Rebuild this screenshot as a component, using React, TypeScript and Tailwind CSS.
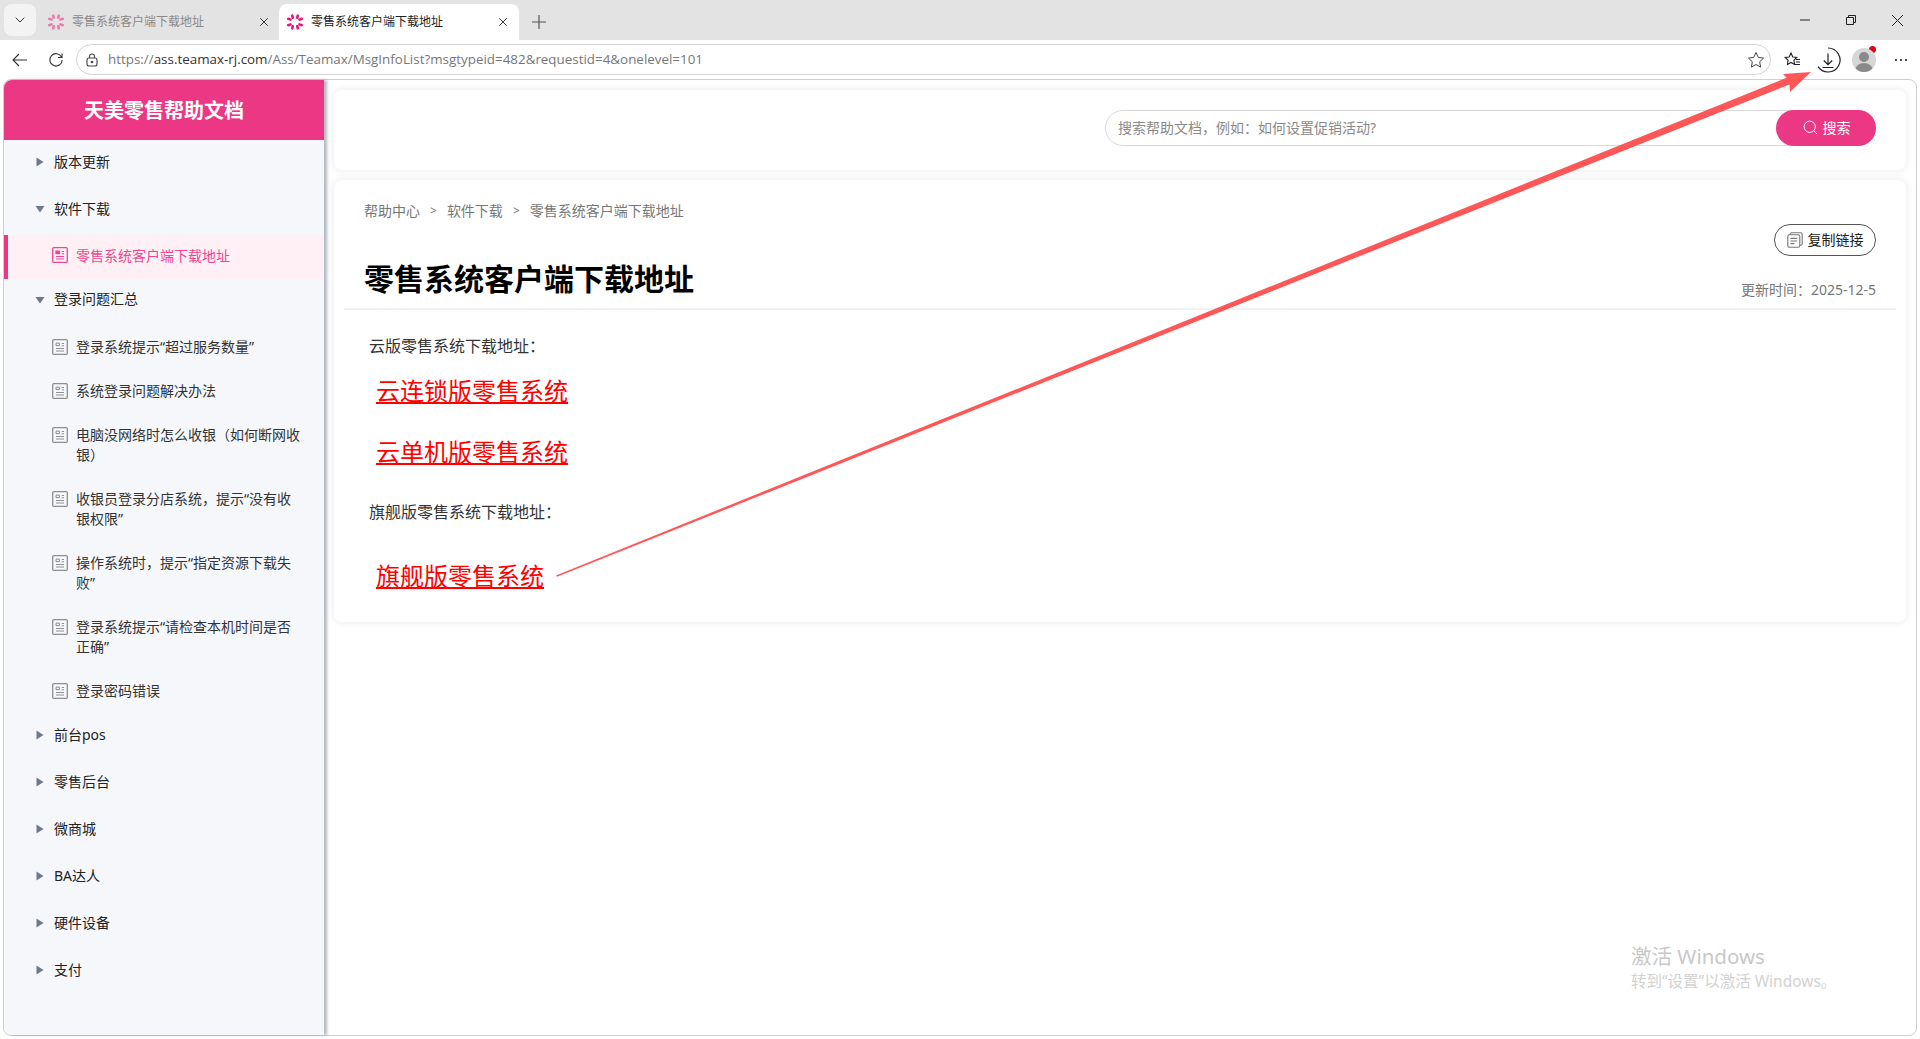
import { ChevronDown, Search, X } from "lucide-react";

const cjk = "font-['Noto_Sans','Noto_Sans_CJK_SC',sans-serif]";

const Favicon = ({ faded }: { faded?: boolean }) => (
  <svg viewBox="0 0 16 16" className={`h-4 w-4 shrink-0 ${faded ? "opacity-50" : ""}`}>
    <g fill="#f0127a">
      <rect x="4.200" y="0.400" width="2.600" height="4.600" rx="1.100" transform="rotate(-14 5.500 2.700)" />
      <rect x="9.200" y="0.400" width="2.600" height="4.600" rx="1.100" transform="rotate(14 10.500 2.700)" />
      <rect x="4.200" y="11" width="2.600" height="4.600" rx="1.100" transform="rotate(14 5.500 13.300)" />
      <rect x="9.200" y="11" width="2.600" height="4.600" rx="1.100" transform="rotate(-14 10.500 13.300)" />
      <rect x="0" y="3.900" width="4.800" height="2.600" rx="1.100" transform="rotate(20 2.400 5.200)" />
      <rect x="0" y="9.500" width="4.800" height="2.600" rx="1.100" transform="rotate(-20 2.400 10.800)" />
      <rect x="11.200" y="3.900" width="4.800" height="2.600" rx="1.100" transform="rotate(-20 13.600 5.200)" />
      <rect x="11.200" y="9.500" width="4.800" height="2.600" rx="1.100" transform="rotate(20 13.600 10.800)" />
    </g>
  </svg>
);

const DocIcon = ({ active }: { active?: boolean }) => {
  const color = active ? "#f0468f" : "#8f8f8f";
  return (
    <svg viewBox="0 0 16 16" className="h-4 w-4 shrink-0" fill="none" stroke={color} strokeWidth="1.300">
      <rect x="0.700" y="0.700" width="14.600" height="14.600" rx="1" />
      <path d="M4 4.200h3.400v2.400H4z" fill={active ? color : "none"} strokeWidth={active ? 1.300 : 1} />
      <path d="M9.800 4.500H12M9.800 6.800H12M4 9.500h8M4 12h8" strokeWidth="1.100" />
    </svg>
  );
};

const CopyIcon = () => (
  <svg viewBox="0 0 16 16" className="h-4 w-4 shrink-0" fill="none" stroke="#777" strokeWidth="1.100">
    <rect x="0.800" y="2.800" width="12" height="12.500" rx="1.800" />
    <path d="M3.200 2.800V2.200A1.500 1.500 0 0 1 4.700.700h9a1.500 1.500 0 0 1 1.500 1.500v9.600a1.500 1.500 0 0 1-1.500 1.500h-.9" />
    <path d="M3.400 6.400h6.800M3.400 9h6.800M3.400 11.600h4" />
  </svg>
);

const Caret = ({ open }: { open?: boolean }) => (
  <svg viewBox="0 0 10 10" className="mt-[2px] h-[10px] w-[10px] shrink-0" fill="#6b7a90">
    {open ? <path d="M0.500 2h9L5 8.500z" /> : <path d="M1.500 0.500v9L8.500 5z" />}
  </svg>
);

const TopItem = ({ label, open, className = "h-[47px]" }: { label: string; open?: boolean; className?: string }) => (
  <div className={`flex items-center gap-[9px] pb-[5px] pl-[31px] text-[14px] text-[#222] ${className}`}>
    <Caret open={open} />
    <span>{label}</span>
  </div>
);

const SubItem = ({ lines }: { lines: string[] }) => (
  <div className={`flex items-start gap-2 pl-[48px] text-[14px] leading-[20px] text-[#333] ${lines.length > 1 ? "h-[64px] pt-3" : "h-[44px] pt-3"}`}>
    <span className="pt-[2px]">
      <DocIcon />
    </span>
    <div>
      {lines.map((line) => (
        <div key={line}>{line}</div>
      ))}
    </div>
  </div>
);

const Tab = ({ active }: { active?: boolean }) => (
  <div className={`flex h-9 items-center pl-2 ${active ? "w-[240px] rounded-t-[8px] bg-white pr-[9px]" : "w-[239px] pr-2"}`}>
    <Favicon faded={!active} />
    <span className={`ml-2 flex-1 text-[12px] ${active ? "text-[#222]" : "text-[#8a8a8a]"}`}>零售系统客户端下载地址</span>
    <X className="h-[14px] w-[14px] text-[#222]" strokeWidth={1.5} />
  </div>
);

const ChromeBar = () => (
  <>
    <div className="flex h-10 items-end bg-[#e3e3e3] pl-1">
      <div className="mb-1 flex h-8 w-8 items-center justify-center rounded-[8px] bg-[#f3f3f3]">
        <ChevronDown className="h-4 w-4 text-[#333]" strokeWidth={1.5} />
      </div>
      <div className="ml-[4px]">
        <Tab />
      </div>
      <Tab active />
      <svg viewBox="0 0 16 16" className="mb-[10px] ml-3 h-4 w-4" fill="none" stroke="#555" strokeWidth="1.200">
        <path d="M8 1v14M1 8h14" />
      </svg>
      <div className="ml-auto flex h-full items-center">
        <div className="flex w-[46px] justify-center">
          <svg viewBox="0 0 10 10" className="h-[10px] w-[10px]" fill="none" stroke="#222">
            <path d="M0 5h10" />
          </svg>
        </div>
        <div className="flex w-[46px] justify-center">
          <svg viewBox="0 0 10 10" className="h-[10px] w-[10px]" fill="none" stroke="#222">
            <path d="M0.500 2.500h7v7h-7zM2.500 2.500v-2h7v7h-2" />
          </svg>
        </div>
        <div className="flex w-[46px] justify-center">
          <svg viewBox="0 0 10 10" className="h-[11px] w-[11px]" fill="none" stroke="#222" strokeWidth="0.900">
            <path d="M0 0l10 10M10 0L0 10" />
          </svg>
        </div>
      </div>
    </div>
    <div className="flex h-[39px] items-start bg-white">
      <div className="flex h-[39px] w-[76px] shrink-0 items-center pl-3">
        <svg viewBox="0 0 16 16" className="h-4 w-4" fill="none" stroke="#333" strokeWidth="1.100">
          <path d="M15 8H1M7 2L1 8l6 6" />
        </svg>
        <svg viewBox="0 0 16 16" className="ml-5 h-4 w-4" fill="none" stroke="#333" strokeWidth="1.100">
          <path d="M13.600 5.200A6.200 6.200 0 1 0 14.200 8M14 1.500v4h-4" />
        </svg>
      </div>
      <div className="mt-1 flex h-[31px] w-[1695px] items-center rounded-full border border-[#d4d4d4] bg-white pl-[9px] pr-[5px]">
        <svg viewBox="0 0 12 14" className="h-[14px] w-3" fill="none" stroke="#444" strokeWidth="1.100">
          <rect x="1" y="5" width="10" height="8" rx="2" />
          <path d="M3.500 5V3.500a2.500 2.500 0 0 1 5 0V5" />
          <circle cx="6" cy="9" r="0.800" fill="#444" />
        </svg>
        <span className="ml-[10px] font-['Open_Sans',sans-serif] text-[13.400px] text-[#777]">
          https://<span className="text-[#333]">ass.teamax-rj.com</span>/Ass/Teamax/MsgInfoList?msgtypeid=482&amp;requestid=4&amp;onelevel=101
        </span>
        <svg viewBox="0 0 18 18" className="ml-auto h-[18px] w-[18px]" fill="none" stroke="#444" strokeWidth="1">
          <path d="M9 1.500l2.300 4.900 5.200.7-3.800 3.700.9 5.300L9 13.500l-4.600 2.600.9-5.300L1.500 7.100l5.200-.7z" />
        </svg>
      </div>
      <div className="ml-3 flex h-[39px] items-center">
        <svg viewBox="0 0 18 18" className="h-[18px] w-[18px]" fill="none" stroke="#222" strokeWidth="1.100">
          <path d="M8 2l1.800 4 4 .5-2.900 2.800.7 4.200L8 11.400l-3.600 2.100.7-4.200L2.200 6.500l4-.5z" />
          <path d="M13 8.500h4M12.800 11h4.200M12 13.500h5" />
        </svg>
        <div className="relative ml-[14px] h-[26px] w-[26px]">
          <svg viewBox="0 0 26 26" className="h-[26px] w-[26px]" fill="none" stroke="#222" strokeWidth="1.200">
            <path d="M13 1a12 12 0 1 1-10 18.600" />
            <path d="M13 6.500v11M8.800 13.500l4.200 4.200 4.200-4.200M7.500 20.500h11" />
          </svg>
        </div>
        <div className="relative ml-[11px] flex h-[24px] w-[24px] items-end justify-center overflow-hidden rounded-full bg-[#d6d6d6]">
          <svg viewBox="0 0 24 24" className="h-[24px] w-[24px]" fill="#8a8a8a">
            <circle cx="12" cy="9" r="5" />
            <path d="M3 24c0-6 4-9 9-9s9 3 9 9z" />
          </svg>
        </div>
        <div className="-ml-[7px] -mt-[21px] h-[7px] w-[7px] rounded-full bg-[#e3000f]" />
        <svg viewBox="0 0 16 4" className="ml-[17px] h-1 w-4" fill="#222">
          <circle cx="3" cy="2" r="1.100" />
          <circle cx="8" cy="2" r="1.100" />
          <circle cx="13" cy="2" r="1.100" />
        </svg>
      </div>
    </div>
  </>
);

const Sidebar = () => (
  <aside className="relative z-10 flex w-[320px] shrink-0 flex-col rounded-bl-[8px] rounded-tl-[8px] bg-[#f5f7fb] shadow-[3px_0_3px_rgba(90,100,115,0.45)]">
    <div className="flex h-[60px] items-center justify-center rounded-tl-[8px] bg-[#ec3785] pt-[2px] text-[20px] font-bold text-white">
      天美零售帮助文档
    </div>
    <TopItem label="版本更新" />
    <TopItem label="软件下载" open />
    <div className="mt-[1px] flex h-[44px] items-center gap-2 border-l-4 border-[#ec3785] bg-[#fff0f6] pb-[4px] pl-[44px] text-[14px] text-[#f0468f]">
      <DocIcon active />
      <span>零售系统客户端下载地址</span>
    </div>
    <TopItem label="登录问题汇总" open className="h-[44px]" />
    <div className="pt-[2px]">
      <SubItem lines={["登录系统提示“超过服务数量”"]} />
      <SubItem lines={["系统登录问题解决办法"]} />
      <SubItem lines={["电脑没网络时怎么收银（如何断网收", "银）"]} />
      <SubItem lines={["收银员登录分店系统，提示“没有收", "银权限”"]} />
      <SubItem lines={["操作系统时，提示“指定资源下载失", "败”"]} />
      <SubItem lines={["登录系统提示“请检查本机时间是否", "正确”"]} />
      <SubItem lines={["登录密码错误"]} />
    </div>
    {["前台pos", "零售后台", "微商城", "BA达人", "硬件设备", "支付"].map((label) => (
      <TopItem key={label} label={label} />
    ))}
  </aside>
);

const SearchCard = () => (
  <div className="flex h-20 items-center justify-end rounded-[8px] bg-white pb-1 pr-[30px] shadow-[0_0_8px_rgba(0,0,0,0.09)]">
    <div className="flex h-9 w-[771px] items-center rounded-full border border-[#d8d8d8] pl-3 text-[14px] text-[#8a8a8a]">
      <span className="pb-[2px]">搜索帮助文档，例如：如何设置促销活动?</span>
      <button className="-my-px -mr-px ml-auto flex h-9 w-[100px] items-center justify-center gap-1 rounded-full bg-[#ec3785] pb-[2px] text-white">
        <Search className="h-[17px] w-[17px]" strokeWidth={1.4} />
        搜索
      </button>
    </div>
  </div>
);

const ArticleCard = () => (
  <div className="mt-[10px] h-[442px] rounded-[8px] bg-white pt-[20px] shadow-[0_0_8px_rgba(0,0,0,0.09)]">
    <div className="flex h-5 items-center pl-[30px] text-[14px] text-[#777]">
      <span>帮助中心</span>
      <span className="mx-[10px] pt-[2px] font-['Open_Sans',sans-serif] text-[12px]">&gt;</span>
      <span>软件下载</span>
      <span className="mx-[10px] pt-[2px] font-['Open_Sans',sans-serif] text-[12px]">&gt;</span>
      <span>零售系统客户端下载地址</span>
    </div>
    <div className="mx-[10px] flex h-[90px] items-start justify-between border-b-2 border-[#f1f1f1] pl-5 pr-5">
      <h1 className="mt-[39px] text-[30px] font-bold leading-[40px] text-black">零售系统客户端下载地址</h1>
      <div className="flex flex-col items-end">
        <button className="mt-[4px] flex h-8 w-[102px] items-center justify-center gap-[5px] rounded-full border border-[#555] pb-px text-[14px] text-[#222]">
          <CopyIcon />
          复制链接
        </button>
        <span className="mt-[24px] text-[14px] leading-[20px] text-[#777]">更新时间：2025-12-5</span>
      </div>
    </div>
    <div className="pl-[35px] text-[16px] text-[#333]">
      <p className="mt-[24px] leading-[24px]">云版零售系统下载地址：</p>
      <p className="mt-[13px] pl-[7px] leading-[40px]">
        <a className="text-[24px] text-[#ff0000] underline">云连锁版零售系统</a>
      </p>
      <p className="mt-[18px] pl-[7px] leading-[40px]">
        <a className="text-[24px] text-[#ff0000] underline">云单机版零售系统</a>
      </p>
      <p className="mt-[25px] leading-[24px]">旗舰版零售系统下载地址：</p>
      <p className="mt-[32px] pl-[7px] leading-[40px]">
        <a className="text-[24px] text-[#ff0000] underline">旗舰版零售系统</a>
      </p>
    </div>
  </div>
);

export default function App() {
  return (
    <div className={`relative h-[1039px] w-[1920px] overflow-hidden bg-white ${cjk}`}>
      <ChromeBar />
      <div className="relative mx-[3px] flex h-[957px] rounded-[8px] border border-[#d0d0d0] bg-white">
        <Sidebar />
        <main className="flex-1 pl-[10px] pr-[10px] pt-[10px]">
          <SearchCard />
          <ArticleCard />
        </main>
      </div>

      {/* annotation drawn over the screenshot */}
      <svg className="pointer-events-none absolute left-0 top-0 z-20 h-[1039px] w-[1920px]" viewBox="0 0 1920 1039">
        <polygon points="556,575.400 1786.500,77.800 1783,74 1811,72 1790,92 1789.500,84.400 557,576.800" fill="#ff5757" />
      </svg>

      <div className="pointer-events-none absolute left-[1631px] top-[942px] z-20 text-[#c8c8c8]">
        <div className="text-[20.500px] leading-[28px]">激活 Windows</div>
        <div className="mt-[1px] text-[15.500px] leading-[20px] text-[#d2d2d2]">转到“设置”以激活 Windows。</div>
      </div>
    </div>
  );
}
